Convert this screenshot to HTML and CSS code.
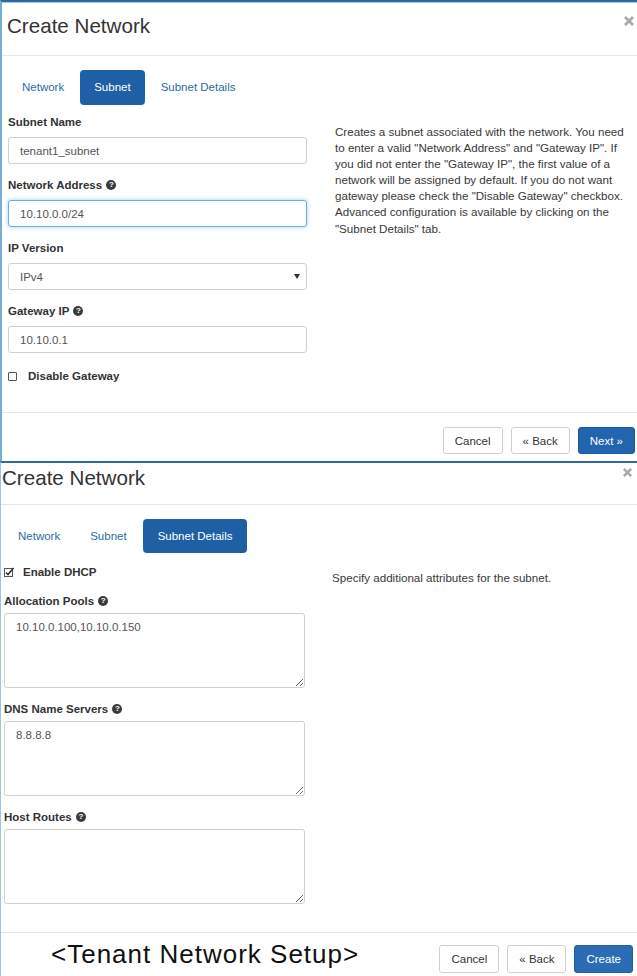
FILE: index.html
```html
<!DOCTYPE html>
<html lang="en">
<head>
<meta charset="utf-8">
<title>Create Network</title>
<link rel="stylesheet" href="styles.css">
</head>
<body>
<section class="modal modal-subnet">
  <header class="modal-header">
    <h1 class="modal-title">Create Network</h1>
    <svg class="close" width="12" height="12" viewBox="0 0 12 12"><path d="M2 2L10 10M10 2L2 10" stroke="#a9a9a9" stroke-width="2.8"/></svg>
  </header>
  <div class="modal-body">
    <nav class="tabs">
      <a class="tab">Network</a>
      <a class="tab active">Subnet</a>
      <a class="tab">Subnet Details</a>
    </nav>
    <div class="pane">
      <form class="form">
        <div class="group">
          <label class="label">Subnet Name</label>
          <input class="control" value="tenant1_subnet">
        </div>
        <div class="group">
          <label class="label">Network Address <span class="help">?</span></label>
          <input class="control focus" value="10.10.0.0/24">
        </div>
        <div class="group">
          <label class="label">IP Version</label>
          <div class="control select"><span>IPv4</span><span class="caret"></span></div>
        </div>
        <div class="group">
          <label class="label">Gateway IP <span class="help">?</span></label>
          <input class="control" value="10.10.0.1">
        </div>
        <div class="check-row">
          <span class="box"></span>
          <span>Disable Gateway</span>
        </div>
      </form>
      <p class="help-text">Creates a subnet associated with the network. You need<br>to enter a valid "Network Address" and "Gateway IP". If<br>you did not enter the "Gateway IP", the first value of a<br>network will be assigned by default. If you do not want<br>gateway please check the "Disable Gateway" checkbox.<br>Advanced configuration is available by clicking on the<br>"Subnet Details" tab.</p>
    </div>
  </div>
  <footer class="modal-footer">
    <button class="btn">Cancel</button>
    <button class="btn">« Back</button>
    <button class="btn btn-primary">Next »</button>
  </footer>
</section>

<section class="modal modal-details">
  <header class="modal-header">
    <h1 class="modal-title">Create Network</h1>
    <svg class="close" width="11" height="11" viewBox="0 0 12 12"><path d="M2 2L10 10M10 2L2 10" stroke="#a9a9a9" stroke-width="2.8"/></svg>
  </header>
  <div class="modal-body">
    <nav class="tabs">
      <a class="tab">Network</a>
      <a class="tab">Subnet</a>
      <a class="tab active">Subnet Details</a>
    </nav>
    <div class="pane">
      <form class="form">
        <div class="check-row">
          <svg class="checked" width="11" height="11" viewBox="0 0 11 11"><rect x="0.5" y="1.5" width="8" height="8" fill="#fff" stroke="#555"/><path d="M2 5.5L4 7.5L9.5 1" fill="none" stroke="#333" stroke-width="1.6"/></svg>
          <span>Enable DHCP</span>
        </div>
        <div class="group">
          <label class="label">Allocation Pools <span class="help">?</span></label>
          <textarea class="control area">10.10.0.100,10.10.0.150</textarea>
        </div>
        <div class="group">
          <label class="label">DNS Name Servers <span class="help">?</span></label>
          <textarea class="control area">8.8.8.8</textarea>
        </div>
        <div class="group">
          <label class="label">Host Routes <span class="help">?</span></label>
          <textarea class="control area"></textarea>
        </div>
      </form>
      <p class="help-text">Specify additional attributes for the subnet.</p>
    </div>
  </div>
  <footer class="modal-footer">
    <span class="caption">&lt;Tenant Network Setup&gt;</span>
    <button class="btn">Cancel</button>
    <button class="btn">« Back</button>
    <button class="btn btn-primary">Create</button>
  </footer>
</section>
</body>
</html>
```
FILE: styles.css
```css
* { box-sizing: border-box; }
html, body { margin: 0; background: #fff; }
body {
  width: 637px;
  font-family: "Liberation Sans", Arial, sans-serif;
  color: #333;
}

.modal { background: #fff; }
.modal-subnet {
  border-top: 2px solid #2f67a4;
  border-left: 2px solid #78acd9;
  box-shadow: inset 0 1px 0 #a7cdec;
}
.modal-details {
  border-top: 2px solid #2f67a4;
  border-left: 1px solid #9cc4e6;
}

/* header */
.modal-header {
  display: flex;
  justify-content: space-between;
  align-items: flex-start;
  border-bottom: 1px solid #e6e6e6;
}
.modal-subnet .modal-header { padding: 12px 2px 17px 5px; }
.modal-details .modal-header { padding: 3px 4px 14px 1px; }
.modal-title {
  margin: 0;
  font-size: 20.6px;
  font-weight: normal;
  line-height: 24px;
  color: #333;
}
.close { display: block; margin-top: 1px; flex: none; }

/* body */
.modal-subnet .modal-body { padding: 14px 6px 29px; }
.modal-details .modal-body { padding: 14px 3px 28px; }

.tabs { display: flex; gap: 2px; }
.tab {
  padding: 0 14px;
  height: 35px;
  line-height: 35px;
  font-size: 11.5px;
  color: #2b6aa8;
  text-decoration: none;
  border-radius: 4px;
}
.modal-details .tab { height: 34px; line-height: 34px; }
.modal-details .tab.active { padding: 0 15px; }
.tab.active { background: #1f5fa6; color: #fff; }

.pane { display: flex; margin-top: 10px; }
.modal-details .pane { margin-top: 12px; }

.form { width: 299px; flex: none; margin: 0; }
.modal-details .form { width: 301px; }

.help-text {
  margin: 0 0 0 28px;
  padding-top: 9px;
  font-size: 11.6px;
  line-height: 16.1px;
  color: #383838;
}
.modal-details .help-text { margin-left: 27px; padding-top: 5px; }

.group { margin-bottom: 14px; }
.group:last-child { margin-bottom: 0; }
.label {
  display: block;
  font-size: 11.5px;
  font-weight: bold;
  line-height: 14px;
  margin-bottom: 8px;
  color: #333;
}
.modal-details .label { margin-bottom: 5px; }

.help {
  display: inline-block;
  overflow: hidden;
  width: 10px;
  height: 10px;
  margin-left: 1px;
  border-radius: 50%;
  background: #3b3b3b;
  color: #fff;
  font-size: 8px;
  font-weight: bold;
  line-height: 10px;
  text-align: center;
  vertical-align: -1px;
}

.control {
  display: block;
  width: 100%;
  height: 27px;
  margin: 0;
  padding: 0 11px;
  border: 1px solid #cfcfcf;
  border-radius: 3px;
  background: #fff;
  font: 11.5px "Liberation Sans", Arial, sans-serif;
  color: #555;
  outline: none;
}
.control.focus {
  border-color: #66afe9;
  box-shadow: 0 0 4px rgba(102, 175, 233, 0.6);
}
.select {
  display: flex;
  align-items: center;
  justify-content: space-between;
  padding: 0 6px 0 11px;
}
.caret {
  width: 0;
  height: 0;
  border-left: 3px solid transparent;
  border-right: 3px solid transparent;
  border-top: 5px solid #333;
}
.area {
  height: 75px;
  padding: 6px 11px;
  line-height: 15px;
  resize: vertical;
}

.check-row {
  display: flex;
  align-items: center;
  gap: 11px;
  margin-top: 16px;
  font-size: 11.5px;
  font-weight: bold;
  line-height: 14px;
  color: #333;
}
.modal-details .check-row { margin-top: 0; margin-bottom: 15px; gap: 8px; }
.box {
  width: 9px;
  height: 9px;
  border: 1px solid #555;
  border-radius: 1px;
  flex: none;
}
.checked { display: block; flex: none; }

/* footer */
.modal-footer {
  display: flex;
  justify-content: flex-end;
  align-items: flex-start;
  gap: 8px;
  border-top: 1px solid #e6e6e6;
}
.modal-subnet .modal-footer { padding: 14px 2px 7px; }
.modal-details .modal-footer { padding: 12px 4px 3px; }

.btn {
  height: 27px;
  padding: 0 11px;
  border: 1px solid #cfcfcf;
  border-radius: 3px;
  background: #fff;
  color: #333;
  font: 11.5px "Liberation Sans", Arial, sans-serif;
}
.modal-details .btn { height: 28px; }
.btn-primary {
  background: #2264ad;
  border-color: #1d5a9c;
  color: #fff;
}
.modal-details .btn-primary { background: #2a6db5; border-color: #245f9f; }

.caption {
  margin-right: auto;
  margin-left: 46px;
  font-size: 26px;
  line-height: 18px;
  letter-spacing: 1px;
  color: #111;
}
```
